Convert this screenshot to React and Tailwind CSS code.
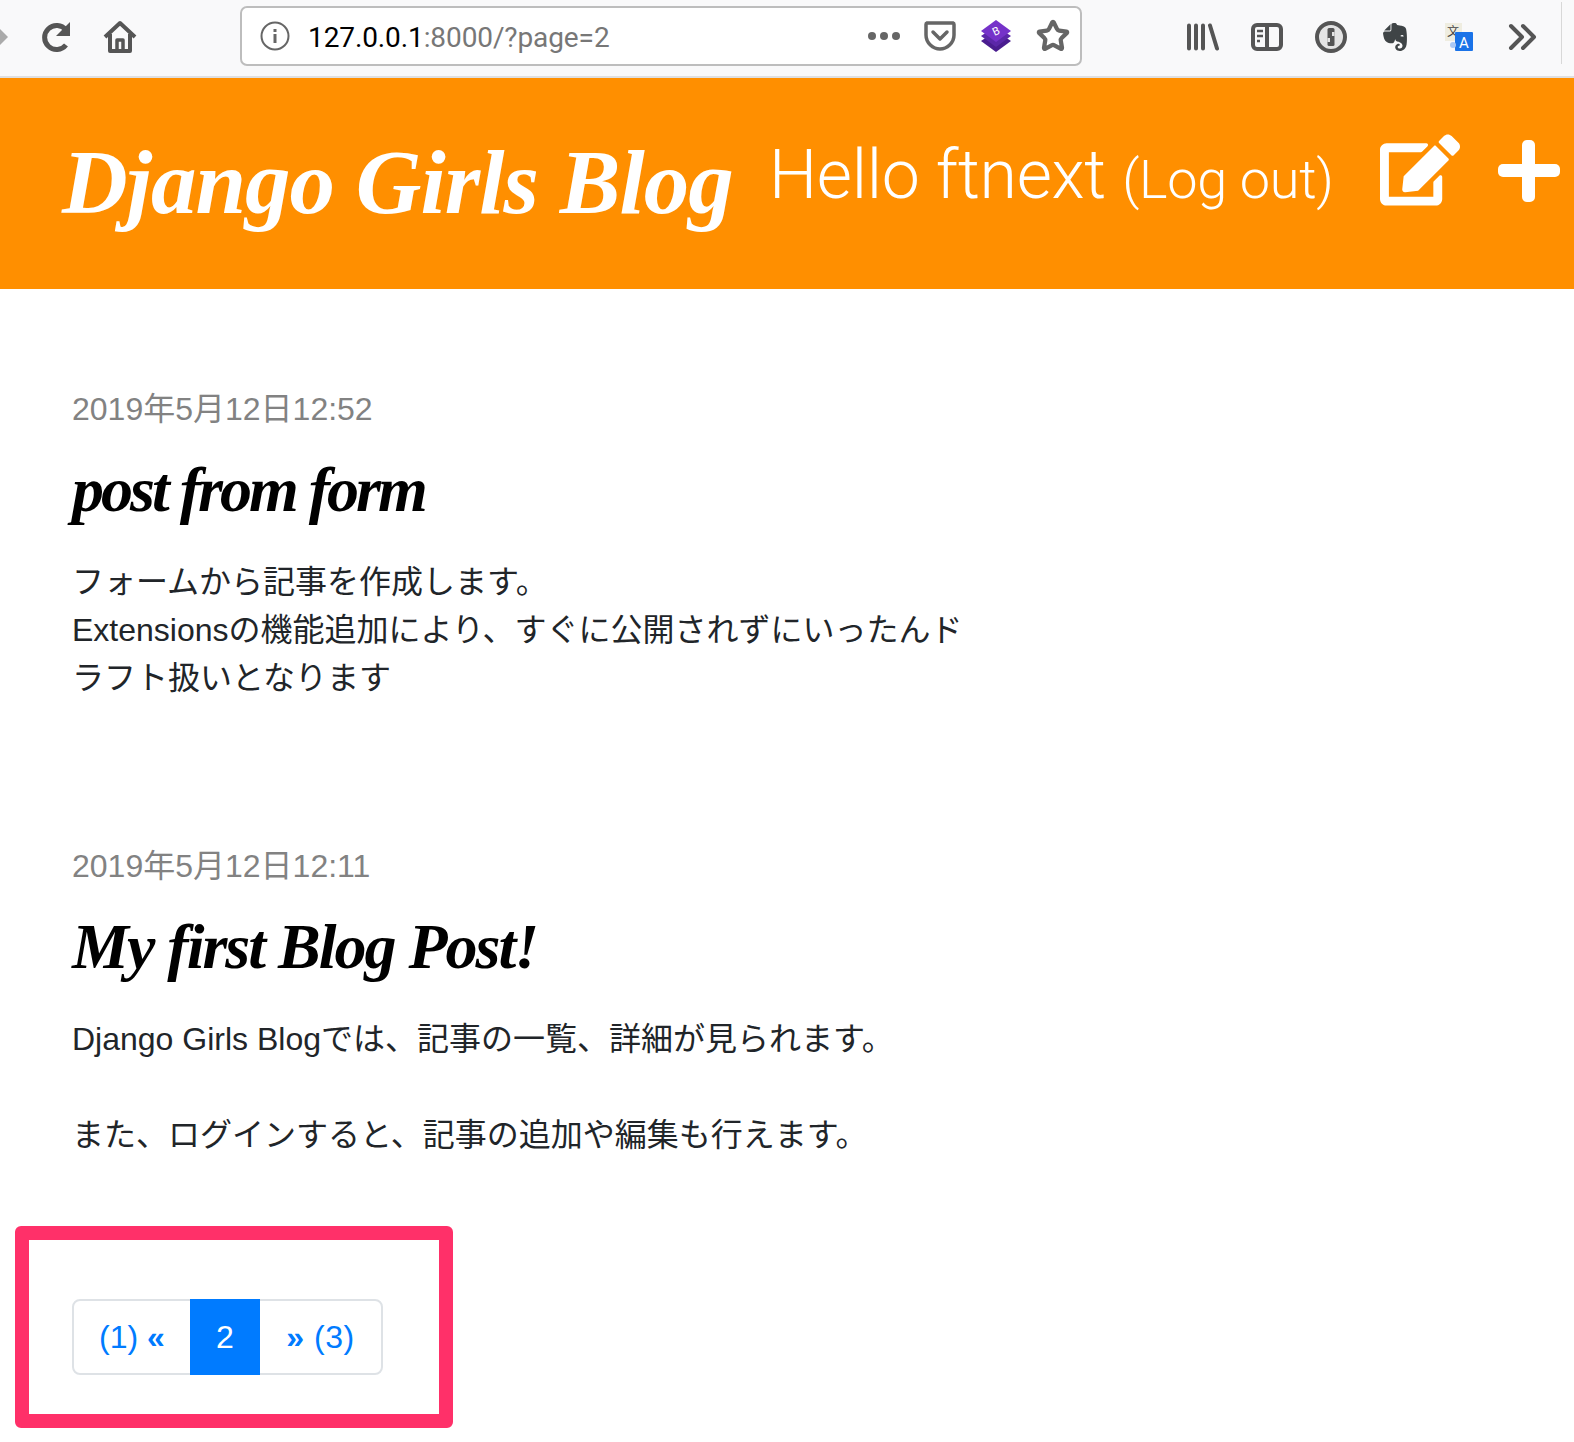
import React from 'react';
import { FaEdit, FaEvernote } from 'react-icons/fa';
import { Star } from 'lucide-react';

const body = { fontFamily: '"Liberation Sans", "Noto Sans CJK JP", sans-serif' };

function ToolIcon({ children }) {
  return <div className="w-16 h-11 flex items-center justify-center">{children}</div>;
}

function Reload() {
  return (
    <svg width="34" height="34" viewBox="0 0 34 34" fill="none" stroke="#555" strokeWidth="5">
      <path d="M27 25a12 12 0 1 1 0-15" />
      <path d="M31 2v14H17z" strokeWidth="0" fill="#555" />
    </svg>
  );
}

function Home() {
  return (
    <svg width="34" height="34" viewBox="0 0 34 34" fill="none" stroke="#555" strokeWidth="4" strokeLinejoin="round">
      <path d="M2 17 17 3l15 14M7 14v17h20V14" />
      <rect x="14" y="20" width="6" height="11" strokeWidth="3.500" />
    </svg>
  );
}

function Pocket() {
  return (
    <svg width="32" height="30" viewBox="0 0 32 30" fill="none" stroke="#666" strokeWidth="3.500" strokeLinecap="round" strokeLinejoin="round">
      <path d="M3 2h26a1.500 1.500 0 0 1 1 1.500V14c0 8-7 14-14 14S2 22 2 14V3.500A1.500 1.500 0 0 1 3 2z" />
      <path d="m9 11 7 7 7-7" strokeWidth="3.500" />
    </svg>
  );
}

function BootstrapStack() {
  return (
    <svg width="32" height="34" viewBox="0 0 32 34">
      <path d="M16 12 31 22 16 33 1 22z" fill="#4a1d8f" />
      <path d="M16 7 31 17 16 28 1 17z" fill="#5b27a8" />
      <path d="M16 1 31 12 16 23 1 12z" fill="#7532c9" />
      <text x="16" y="16" textAnchor="middle" fontSize="11" fill="#fff" fontFamily="Roboto" transform="rotate(-25 16 12)">B</text>
    </svg>
  );
}

function Library() {
  return (
    <svg width="32" height="28" viewBox="0 0 32 28" stroke="#555" strokeWidth="4" strokeLinecap="round" fill="none">
      <path d="M2 2.500v23M9 2.500v23M16 2.500v23M23 2.500l7 23" />
    </svg>
  );
}

function Sidebar() {
  return (
    <svg width="32" height="28" viewBox="0 0 32 28" fill="none" stroke="#555" strokeWidth="4">
      <rect x="2" y="2" width="28" height="24" rx="4" />
      <path d="M16 2v24" />
      <path d="M6 8h6M6 13h6M6 18h3" strokeWidth="2.500" />
    </svg>
  );
}

function OnePassword() {
  return (
    <svg width="32" height="32" viewBox="0 0 32 32">
      <circle cx="16" cy="16" r="14" fill="#e4e4e4" stroke="#555" strokeWidth="4" />
      <rect x="12.500" y="7" width="7" height="18" rx="1.500" fill="#555" />
      <rect x="17" y="11" width="2.500" height="4" fill="#e4e4e4" />
      <rect x="12.500" y="17" width="2.500" height="4" fill="#e4e4e4" />
    </svg>
  );
}

function Translate() {
  return (
    <svg width="28" height="28" viewBox="0 0 28 28">
      <rect x="0" y="0" width="17" height="18" fill="#efede0" />
      <text x="8" y="13" textAnchor="middle" fontSize="12" fill="#444" fontFamily="Noto Sans CJK SC">文</text>
      <rect x="10" y="9" width="18" height="19" rx="1" fill="#1a73e8" />
      <text x="19" y="25" textAnchor="middle" fontSize="15" fill="#fff" fontFamily="Roboto">A</text>
      <circle cx="8" cy="22" r="3" fill="#a9c8f5" />
    </svg>
  );
}

function DoubleChevron() {
  return (
    <svg width="30" height="28" viewBox="0 0 30 28" fill="none" stroke="#555" strokeWidth="4" strokeLinecap="round" strokeLinejoin="round">
      <path d="m3 3 11 11L3 25M15 3l11 11-11 11" />
    </svg>
  );
}

function Toolbar() {
  return (
    <div className="h-[78px] bg-[#f9f9fa] border-b-2 border-[#dfdfe0] flex items-start relative" style={body}>
      <div className="w-0 h-0 mt-[29px] border-y-[8px] border-y-transparent border-l-[8px] border-l-[#aaa]"></div>
      <div className="flex items-center h-[74px] ml-[16px]">
        <ToolIcon><Reload /></ToolIcon>
        <ToolIcon><Home /></ToolIcon>
      </div>
      <div className="ml-[88px] mt-[6px] w-[842px] h-[60px] bg-white border-2 border-[#bdbdbd] rounded-[7px] flex items-center pl-[18px] pr-[12px]">
        <svg width="30" height="30" viewBox="0 0 30 30" fill="none" stroke="#666" strokeWidth="2">
          <circle cx="15" cy="15" r="13.500" />
          <path d="M15 13v9M15 8v3" strokeWidth="3" />
        </svg>
        <div className="ml-[18px] mt-[3px] text-[28px] tracking-[-0.1px]" style={{ fontFamily: 'Roboto, sans-serif' }}>
          <span className="text-black">127.0.0.1</span>
          <span className="text-[#777]">:8000/?page=2</span>
        </div>
        <div className="ml-auto flex items-center gap-[24px] mr-[-2px]">
          <div className="flex gap-[4px]">
            <span className="w-[8px] h-[8px] rounded-full bg-[#666]"></span>
            <span className="w-[8px] h-[8px] rounded-full bg-[#666]"></span>
            <span className="w-[8px] h-[8px] rounded-full bg-[#666]"></span>
          </div>
          <Pocket />
          <BootstrapStack />
          <Star size={34} strokeWidth={3} className="text-[#666]" />
        </div>
      </div>
      <div className="flex items-center h-[74px] ml-[89px]">
        <ToolIcon><Library /></ToolIcon>
        <ToolIcon><Sidebar /></ToolIcon>
        <ToolIcon><OnePassword /></ToolIcon>
        <ToolIcon><FaEvernote size={32} className="text-[#3f4446]" /></ToolIcon>
        <ToolIcon><Translate /></ToolIcon>
        <ToolIcon><DoubleChevron /></ToolIcon>
      </div>
      <div className="absolute right-[12px] top-[2px] bottom-[12px] w-px bg-[#d8d8d8]"></div>
    </div>
  );
}

function Header() {
  return (
    <div className="h-[211px] bg-[#ff8f00] flex items-center text-white pl-[62px]">
      <div className="text-[91px] font-bold italic font-['Liberation_Serif',serif] tracking-[-1px] w-[707px] whitespace-nowrap">
        Django Girls Blog
      </div>
      <div className="text-[68px] font-light whitespace-nowrap font-['Roboto',sans-serif] tracking-[-0.3px] -mt-[18px]">
        Hello ftnext <span className="text-[54px]">(Log out)</span>
      </div>
      <FaEdit size={80} className="ml-[46px] -mt-[28px]" />
      <svg className="ml-[38px] -mt-[26px]" width="62" height="62" viewBox="0 0 62 62" fill="#fff">
        <rect x="24" y="0" width="13" height="62" rx="5" />
        <rect x="0" y="24" width="62" height="13" rx="5" />
      </svg>
    </div>
  );
}

function Post({ date, title, children, className = '', titleClass = '' }) {
  return (
    <div className={`pl-[72px] ${className}`} style={body}>
      <div className="text-[32px] leading-[48px] text-[#828282]">{date}</div>
      <h2 className={`text-[64px] leading-[86px] mt-[14px] font-bold italic font-['Liberation_Serif',serif] text-black whitespace-nowrap ${titleClass}`}>
        {title}
      </h2>
      <p className="w-[900px] mt-[25px] text-[32px] leading-[48px] text-[#212529]">{children}</p>
    </div>
  );
}

function Pagination() {
  return (
    <div className="ml-[15px] w-[438px] h-[202px] border-[14px] border-[#ff3069] rounded-[6px] pl-[43px] pt-[59px]" style={body}>
      <div className="flex w-fit h-[76px] text-[32px] text-[#007bff] border-2 border-[#dee2e6] rounded-[8px]">
        <div className="w-[116px] flex items-center justify-center whitespace-pre">(1) <span className="font-bold">«</span></div>
        <div className="w-[70px] -my-[2px] flex items-center justify-center bg-[#007bff] text-white">2</div>
        <div className="w-[121px] flex items-center justify-center whitespace-pre tracking-[0.5px]"><span className="font-bold">»</span> (3)</div>
      </div>
    </div>
  );
}

export default function App() {
  return (
    <div className="min-h-[1442px] bg-white">
      <Toolbar />
      <Header />
      <div className="pt-[96px]">
        <Post className="mb-[140px]" titleClass="tracking-[-3px]" date="2019年5月12日12:52" title="post from form">
          フォームから記事を作成します。<br />
          Extensionsの機能追加により、すぐに公開されずにいったんドラフト扱いとなります
        </Post>
        <Post className="mb-[67px]" titleClass="tracking-[-2px]" date="2019年5月12日12:11" title="My first Blog Post!">
          Django Girls Blogでは、記事の一覧、詳細が見られます。<br /><br />
          また、ログインすると、記事の追加や編集も行えます。
        </Post>
      </div>
      <Pagination />
    </div>
  );
}
